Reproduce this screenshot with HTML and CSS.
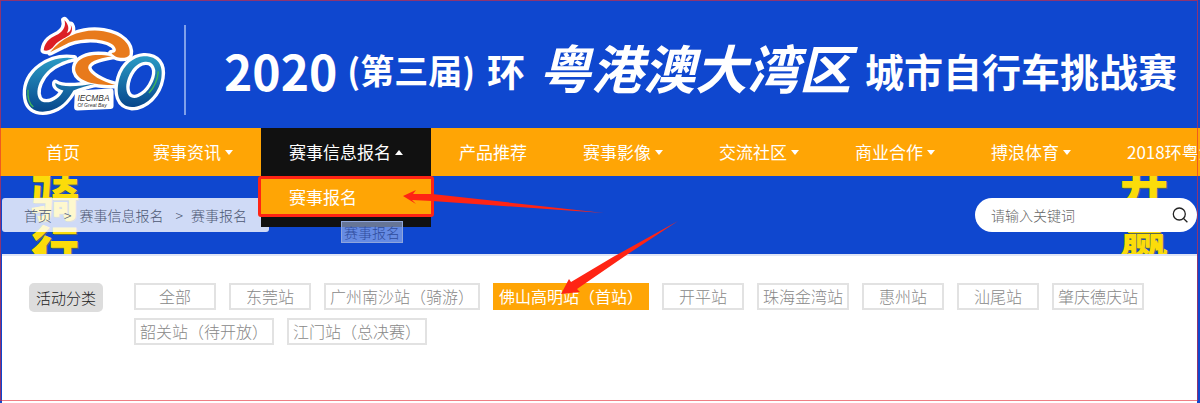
FILE: index.html
```
<!DOCTYPE html>
<html lang="zh-cn">

<head>
    <meta charset="utf-8" />
    <meta name="viewport" content="width=device-width, initial-scale=1" />
    <title>赛事报名</title>
    <link rel="stylesheet" href="styles.css">
</head>

<body>
    <div class="page">
        <header class="banner">
            <svg class="logo" viewBox="60 50 440 310" role="img" aria-label="GCO">
                <defs>
                    <linearGradient id="blue" x1="0" y1="0" x2="0" y2="1">
                        <stop offset="0" stop-color="#2a9bc4" />
                        <stop offset="1" stop-color="#07478c" />
                    </linearGradient>
                    <g id="bike">
                        <path d="M150 158C190 108 250 86 310 95C365 104 394 135 388 165C378 180 345 177 334 160C350 160 352 147 336 134C300 112 225 115 190 138Z" />
                        <path d="M335 170C260 156 220 180 226 215C235 248 290 258 345 256C305 245 268 225 264 205C264 187 290 178 335 170Z" />
                    </g>
                    <path id="gee" d="M222 176C150 165 75 215 78 285C80 340 130 345 170 325C200 308 212 285 220 272C240 264 262 258 285 252C240 258 190 266 166 250C164 262 178 270 190 272C180 295 150 315 125 305C95 285 120 215 180 190C200 180 215 178 222 176Z" />
                    <path id="wheel" fill-rule="evenodd" d="M430 170C470 168 490 195 483 235C475 285 435 322 395 322C355 320 345 280 358 235C370 195 400 172 430 170ZM435 186C405 188 380 225 378 262C378 290 395 300 415 292C445 280 467 240 465 212C462 194 452 185 435 186Z" />
                    <path id="flame" d="M131 152C134 122 158 112 174 104C192 92 198 78 193 62C206 74 208 90 200 100C212 96 214 88 212 76C220 90 214 104 202 110C182 122 172 126 163 138C154 150 142 156 131 152Z" />
                </defs>
                <g fill="#fff" stroke="#fff" stroke-width="20" stroke-linejoin="round">
                    <use href="#bike" />
                    <use href="#gee" />
                    <use href="#wheel" />
                    <use href="#flame" />
                    <path d="M234 282L330 276V318L232 322Z" />
                </g>
                <use href="#bike" fill="#e87a1c" />
                <use href="#gee" fill="url(#blue)" />
                <use href="#wheel" fill="url(#blue)" />
                <use href="#flame" fill="#dc1f26" />
                <path d="M84 270C82 295 88 312 100 322M474 215C472 240 462 262 446 280" fill="none" stroke="#3fb55a" stroke-width="4" />
                <text class="logo-text" x="232" y="304" font-size="25">IECMBA</text>
                <text class="logo-text" x="232" y="321" font-size="15">Of Great Bay</text>
            </svg>
            <h1 class="title">
                <span class="title-year">2020</span>
                <span class="title-round">(第三届)</span>
                <span class="title-ring">环</span>
                <span class="title-area">粤港澳大湾区</span>
                <span class="title-race">城市自行车挑战赛</span>
            </h1>
        </header>

        <nav class="nav">
            <ul class="nav-list">
                <li class="nav-item"><a href="#">首页</a></li>
                <li class="nav-item"><a href="#">赛事资讯<i class="caret"></i></a></li>
                <li class="nav-item active">
                    <a href="#">赛事信息报名<i class="caret caret-up"></i></a>
                    <div class="submenu">
                        <a href="#">赛事报名</a>
                    </div>
                    <span class="drag-label">赛事报名</span>
                </li>
                <li class="nav-item"><a href="#">产品推荐</a></li>
                <li class="nav-item"><a href="#">赛事影像<i class="caret"></i></a></li>
                <li class="nav-item"><a href="#">交流社区<i class="caret"></i></a></li>
                <li class="nav-item"><a href="#">商业合作<i class="caret"></i></a></li>
                <li class="nav-item"><a href="#">搏浪体育<i class="caret"></i></a></li>
                <li class="nav-item"><a href="#">2018环粤港澳</a></li>
            </ul>
        </nav>

        <div class="strip">
            <div class="slogan slogan-left">骑行</div>
            <div class="slogan slogan-right">开赢</div>
            <div class="crumbs">
                <a href="#">首页</a>
                <span>&gt;</span>
                <a href="#">赛事信息报名</a>
                <span>&gt;</span>
                <a href="#">赛事报名</a>
            </div>
            <form class="search">
                <input type="text" name="keyword" placeholder="请输入关键词" aria-label="请输入关键词">
                <button type="submit" aria-label="搜索">
                    <svg viewBox="0 0 16 16" width="16" height="16" fill="none" stroke="#222" stroke-width="1.3">
                        <circle cx="7.3" cy="7" r="6" />
                        <path d="M11.3 11.3L15.4 15.2" />
                    </svg>
                </button>
            </form>
        </div>

        <main class="panel">
            <span class="filter-name">活动分类</span>
            <div class="filter-list">
                <a href="#">全部</a>
                <a href="#">东莞站</a>
                <a href="#">广州南沙站（骑游）</a>
                <a href="#" class="on">佛山高明站（首站）</a>
                <a href="#">开平站</a>
                <a href="#">珠海金湾站</a>
                <a href="#">惠州站</a>
                <a href="#">汕尾站</a>
                <a href="#">肇庆德庆站</a>
                <a href="#">韶关站（待开放）</a>
                <a href="#">江门站（总决赛）</a>
            </div>
        </main>

        <!-- 标注 -->
        <svg class="arrows" width="700" height="310" fill="#ff2414" aria-hidden="true">
            <path d="M403 196L416 190L413 194L432 194L604 213L432 201L412 200L416 204Z" />
            <path d="M561 294L569 279L571 282L613 257L678 221L628 254L577 289L580 292Z" />
        </svg>
        <div class="frame"></div>
    </div>
</body>

</html>
```
FILE: styles.css
```
* {
    box-sizing: border-box;
}

body {
    margin: 0;
    font-family: "Noto Sans CJK SC", "Microsoft YaHei", sans-serif;
    background-color: #0f47cf;
}

a {
    color: inherit;
    text-decoration: none;
}

.page {
    position: relative;
    display: flex;
    flex-direction: column;
    min-height: 100vh;
    overflow: hidden;
}

.banner {
    display: flex;
    align-items: center;
    height: 128px;
    padding: 0 20px;
}

.logo {
    flex: none;
    width: 147px;
    height: 104px;
    margin-top: 8px;
}

.logo-text {
    font-family: "Liberation Sans", sans-serif;
    font-style: italic;
    fill: #333;
}

.title {
    display: flex;
    align-items: center;
    height: 90px;
    margin: 12px 0 0 17px;
    padding-left: 38px;
    border-left: 2px solid #7fa0ea;
    color: #fff;
    font-weight: 700;
    line-height: 1;
    white-space: nowrap;
}

.title-year {
    font-size: 48px;
}

.title-round {
    margin-left: 10px;
    font-size: 34px;
}

.title-ring {
    margin-left: 12px;
    font-size: 38px;
}

.title-area {
    margin: 0 14px;
    padding-bottom: 6px;
    font-size: 52px;
    font-style: italic;
}

.title-race {
    font-size: 39px;
}

.nav {
    padding-left: 1px;
    background-color: #ffa505;
}

.nav-list {
    display: flex;
    margin: 0;
    padding: 0;
    list-style: none;
}

.nav-item {
    position: relative;
    flex: none;
    min-width: 124px;
    color: #fff;
    font-size: 17px;
    line-height: 48px;
}

.nav-item > a {
    display: flex;
    align-items: center;
    justify-content: center;
    gap: 4px;
    padding: 0 28px;
}

.nav-item.active {
    background-color: #111;
}

.caret {
    border: 4px solid transparent;
    border-top: 5px solid #fff;
    border-bottom: 0;
}

.caret-up {
    border-top: 0;
    border-bottom: 5px solid #fff;
}

.submenu {
    position: absolute;
    z-index: 2;
    top: 100%;
    left: 0;
    width: 100%;
    padding-bottom: 10px;
    background-color: #111;
}

.submenu a {
    display: block;
    margin: 0 -3px;
    padding-left: 28px;
    border: 3px solid #ff2414;
    border-radius: 3px;
    background-color: #ffa505;
    line-height: 35px;
}

.drag-label {
    position: absolute;
    z-index: 3;
    top: 93px;
    left: 80px;
    padding: 0 2px;
    border: 1px solid #8ea5dc;
    background-color: rgba(160, 185, 240, .6);
    color: #2f4c9c;
    font-size: 14px;
    font-weight: 300;
    line-height: 20px;
}

.strip {
    position: relative;
    display: flex;
    align-items: center;
    justify-content: space-between;
    height: 78px;
    padding: 0 3px 0 2px;
    overflow: hidden;
}

.slogan {
    position: absolute;
    width: 48px;
    color: #fbdc0a;
    font-size: 48px;
    font-weight: 900;
    line-height: 50px;
    text-shadow: 1px 1px 0 #5a6a50;
}

.slogan-left {
    top: -6px;
    left: 31px;
}

.slogan-right {
    top: -20px;
    right: 32px;
}

.crumbs {
    position: relative;
    display: flex;
    gap: 8px;
    padding: 0 22px;
    border-radius: 3px;
    background-color: rgba(255, 255, 255, .8);
    color: #4d5873;
    font-size: 14px;
    font-weight: 300;
    line-height: 34px;
}

.crumbs span {
    margin-left: 4px;
}

.search {
    position: relative;
    display: flex;
    align-items: center;
    width: 222px;
    height: 34px;
    padding: 0 9px 0 16px;
    border-radius: 17px;
    background-color: #fff;
}

.search input {
    flex: 1;
    min-width: 0;
    padding: 0;
    border: 0;
    outline: 0;
    background: none;
    font-family: inherit;
    font-size: 14px;
    font-weight: 300;
}

.search input::placeholder {
    color: #666;
}

.search button {
    display: flex;
    padding: 0;
    border: 0;
    background: none;
    cursor: pointer;
}

.panel {
    display: flex;
    flex: 1;
    align-items: flex-start;
    gap: 31px;
    margin: 0 3px 0 2px;
    padding: 27px 27px 0;
    border-top: 2px solid #dfe5f5;
    background-color: #fff;
}

.filter-name {
    flex: none;
    padding: 0 7px;
    border-radius: 5px;
    background-color: #ddd;
    color: #222;
    font-size: 15px;
    font-weight: 300;
    line-height: 29px;
}

.filter-list {
    display: flex;
    flex-wrap: wrap;
    gap: 8px 13px;
}

.filter-list a {
    min-width: 82px;
    padding: 0 4px;
    border: 2px solid #e2e2e2;
    color: #888;
    font-size: 16px;
    font-weight: 300;
    line-height: 23px;
    text-align: center;
}

.filter-list a.on {
    border-color: #ffa505;
    background-color: #ffa505;
    color: #fff;
    font-weight: 400;
}

.arrows {
    position: absolute;
    z-index: 4;
    top: 0;
    left: 0;
    pointer-events: none;
}

.frame {
    position: absolute;
    z-index: 5;
    top: 0;
    right: 2px;
    bottom: 2px;
    left: 0;
    border: 1px solid rgba(228, 40, 50, .6);
    pointer-events: none;
}
```
